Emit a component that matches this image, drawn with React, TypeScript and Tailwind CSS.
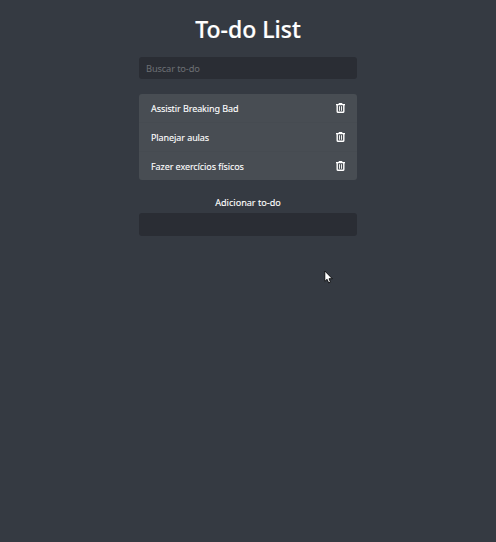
import { useState } from 'react';

const initialTodos = ['Assistir Breaking Bad', 'Planejar aulas', 'Fazer exercícios físicos'];

function TrashIcon() {
  return (
    <svg width="9" height="10" viewBox="0 0 9 10" fill="none" stroke="#ffffff" aria-hidden="true">
      <path d="M0 1.6h9" strokeWidth="1.4" />
      <path d="M2.7 .6h3.6" strokeWidth="1.2" />
      <path d="M1.2 2v6.4q0 .9 .9 .9h4.8q.9 0 .9-.9V2" strokeWidth="1.4" />
      <path d="M3.5 3.2v4.6M5.5 3.2v4.6" strokeWidth=".9" />
    </svg>
  );
}

function Cursor() {
  return (
    <svg className="absolute left-[324px] top-[270px]" width="9" height="14" viewBox="0 0 9 14" aria-hidden="true">
      <path d="M.8 1v10.4l2.3-2.1 1.6 3.6 1.8-.8L5 8.7h3.3z" fill="#ffffff" stroke="#08090b" strokeWidth=".9" />
    </svg>
  );
}

export default function App() {
  const [todos, setTodos] = useState(initialTodos);

  return (
    <div className="relative h-[542px] w-[496px] bg-[#353a42] font-['Noto_Sans',sans-serif] text-white">
      <main className="mx-auto flex w-[218px] flex-col pt-[15px]">
        <h1 className="h-7 text-center text-[23px] leading-7 font-medium whitespace-nowrap [-webkit-text-stroke:0.2px_white]">To-do List</h1>
        <input
          className="mt-[14px] h-[22px] rounded-[3px] bg-[#2a2d34] px-[7px] text-[9.3px] tracking-[-0.15px] outline-none placeholder:text-[#6d7075]"
          placeholder="Buscar to-do"
        />
        <ul className="mt-[15px] overflow-hidden rounded-[3px] bg-[#484d53]">
          {todos.map((todo) => (
            <li key={todo} className="flex h-[29px] items-center justify-between border-b border-[#464b51] px-3 text-[9px] tracking-[-0.08px] last:h-7 last:border-b-0">
              <span className="pt-px [-webkit-text-stroke:0.1px_white]">{todo}</span>
              <button aria-label="Remover" onClick={() => setTodos(todos.filter((item) => item !== todo))}>
                <TrashIcon />
              </button>
            </li>
          ))}
        </ul>
        <label htmlFor="new-todo" className="mt-[14px] h-4 text-center text-[9.1px] leading-[17px] [-webkit-text-stroke:0.1px_white]">Adicionar to-do</label>
        <input id="new-todo" className="mt-[3px] h-[23px] rounded-[3px] bg-[#2a2d34] px-[7px] text-[9.3px] outline-none" />
      </main>
      <Cursor />
    </div>
  );
}
